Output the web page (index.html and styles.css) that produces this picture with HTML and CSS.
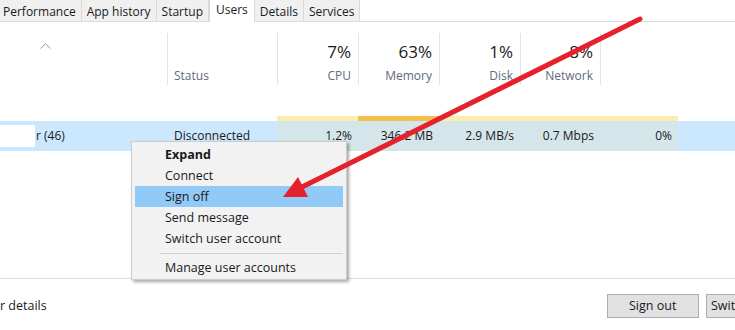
FILE: index.html
```html
<!DOCTYPE html>
<html lang="en">
<head>
    <meta charset="UTF-8">
    <meta name="viewport" content="width=device-width, initial-scale=1.0">
    <link rel="stylesheet" href="styles.css">
    <title>Task Manager - Users</title>
</head>
<body>
<div class="tm">

    <div class="tabs">
        <div class="tab">Performance</div>
        <div class="tab">App history</div>
        <div class="tab">Startup</div>
        <div class="tab active">Users</div>
        <div class="tab">Details</div>
        <div class="tab">Services</div>
    </div>

    <div class="list">
        <div class="cols head">
            <div class="hc name">
                <svg class="sort" width="11" height="6" viewBox="0 0 11 6"><polyline points="0.5,5.5 5.5,0.8 10.5,5.5" fill="none" stroke="#9a9a9a" stroke-width="1"/></svg>
            </div>
            <div class="hc status"><span class="lbl">Status</span></div>
            <div class="hc num"><span class="pct">7%</span><span class="lbl">CPU</span></div>
            <div class="hc num"><span class="pct">63%</span><span class="lbl">Memory</span></div>
            <div class="hc num"><span class="pct">1%</span><span class="lbl">Disk</span></div>
            <div class="hc num"><span class="pct">8%</span><span class="lbl">Network</span></div>
            <div class="hc num"></div>
        </div>

        <div class="cols heat">
            <div></div>
            <div></div>
            <div class="low"></div>
            <div class="high"></div>
            <div class="low"></div>
            <div class="low"></div>
            <div class="low"></div>
        </div>

        <div class="cols row">
            <div class="c name"><span class="mask"></span>r (46)</div>
            <div class="c status">Disconnected</div>
            <div class="c num">1.2%</div>
            <div class="c num">346.2 MB</div>
            <div class="c num">2.9 MB/s</div>
            <div class="c num">0.7 Mbps</div>
            <div class="c num">0%</div>
        </div>
    </div>

    <div class="footer">
        <div class="more-less">r details</div>
        <button class="btn">Sign out</button>
        <button class="btn switch">Switch user</button>
    </div>

    <div class="menu">
        <div class="item bold">Expand</div>
        <div class="item">Connect</div>
        <div class="item hover">Sign off</div>
        <div class="item">Send message</div>
        <div class="item">Switch user account</div>
        <div class="sep"></div>
        <div class="item">Manage user accounts</div>
    </div>

    <svg class="arrow" width="735" height="330" viewBox="0 0 735 330">
        <line x1="640" y1="19" x2="302" y2="187" stroke="#e5222b" stroke-width="5" stroke-linecap="round"/>
        <polygon points="283,197 298,177 308,197" fill="#e5222b"/>
    </svg>

</div>
</body>
</html>
```

FILE: styles.css
```css
html, body
{
    margin: 0;
    padding: 0;
    background-color: #ffffff;
}

.tm
{
    position: relative;
    width: 735px;
    height: 330px;
    overflow: hidden;
    font-family: "Open Sans", "Noto Sans", sans-serif;
    font-size: 12px;
    color: #1a1a1a;
}

/* tab strip */
.tabs
{
    display: flex;
    height: 22px;
    box-sizing: border-box;
    border-bottom: 1px solid #dadada;
}

.tab
{
    height: 21px;
    line-height: 24px;
    padding: 0 5px;
    box-sizing: border-box;
    background-color: #f0f0f0;
    border-right: 1px solid #d9d9d9;
    white-space: nowrap;
}

.tab:first-child
{
    padding-left: 3px;
}

.tab.active
{
    height: 22px;
    line-height: 20px;
    padding: 0 6px;
    background-color: #ffffff;
    border-left: 1px solid #d9d9d9;
}

/* list */
.list
{
    height: 256px;
    border-bottom: 1px solid #dcdcdc;
}

.cols
{
    display: grid;
    grid-template-columns: 167px 110px 81px 81px 81px 80px 78px;
}

.head
{
    height: 66px;
    box-sizing: border-box;
    padding-top: 11px;
    align-items: start;
}

.hc
{
    height: 52px;
    box-sizing: border-box;
    display: flex;
    flex-direction: column;
    justify-content: flex-end;
    border-left: 1px solid #e3e3e3;
    padding-right: 7px;
    text-align: right;
}

.hc.name
{
    border-left: none;
    justify-content: flex-start;
}

.sort
{
    margin-left: 40px;
    margin-top: 10px;
}

.hc.status
{
    text-align: left;
    padding-left: 6px;
}

.pct
{
    font-size: 17px;
    line-height: 20px;
    color: #1a1a1a;
}

.lbl
{
    font-size: 12px;
    line-height: 18px;
    margin-top: 5px;
    color: #606a78;
}

.heat
{
    margin-top: 28px;
    height: 5px;
}

.heat .low
{
    background-color: #f9eeb0;
}

.heat .high
{
    background-color: #f4c04a;
}

.row
{
    height: 30px;
    line-height: 30px;
    background-color: #cce8ff;
}

.c
{
    white-space: nowrap;
}

.c.name
{
    display: flex;
    align-items: center;
}

.mask
{
    display: inline-block;
    width: 35px;
    height: 22px;
    margin-right: 1px;
    background-color: #ffffff;
}

.c.status
{
    padding-left: 7px;
}

.c.num
{
    text-align: right;
    padding-right: 6px;
    background-color: #d5e6ea;
}

/* bottom bar */
.footer
{
    display: flex;
    align-items: center;
    height: 51px;
    padding-top: 2px;
    box-sizing: border-box;
}

.more-less
{
    flex: 0 0 607px;
    font-size: 12.5px;
}

.btn
{
    flex: 0 0 92px;
    height: 24px;
    margin-right: 7px;
    padding: 0 0 0 21px;
    font-family: "Open Sans", "Noto Sans", sans-serif;
    font-size: 12.5px;
    color: #1a1a1a;
    background-color: #e1e1e1;
    border: 1px solid #adadad;
    white-space: nowrap;
    text-align: left;
}

.btn.switch
{
    padding-left: 4px;
}

/* context menu */
.menu
{
    position: absolute;
    left: 131px;
    top: 141px;
    width: 216px;
    height: 139px;
    box-sizing: border-box;
    padding: 2px 3px;
    background-color: #f2f2f2;
    border: 1px solid #cccccc;
    box-shadow: 2px 2px 3px rgba(0, 0, 0, 0.35);
}

.item
{
    height: 21px;
    line-height: 21px;
    padding-left: 30px;
    font-size: 12.5px;
    color: #1a1a1a;
}

.item.bold
{
    font-weight: bold;
}

.item.hover
{
    background-color: #91c9f7;
}

.sep
{
    height: 1px;
    margin: 4px 0 3px 25px;
    background-color: #d0d0d0;
}

.arrow
{
    position: absolute;
    left: 0;
    top: 0;
    pointer-events: none;
}
```
